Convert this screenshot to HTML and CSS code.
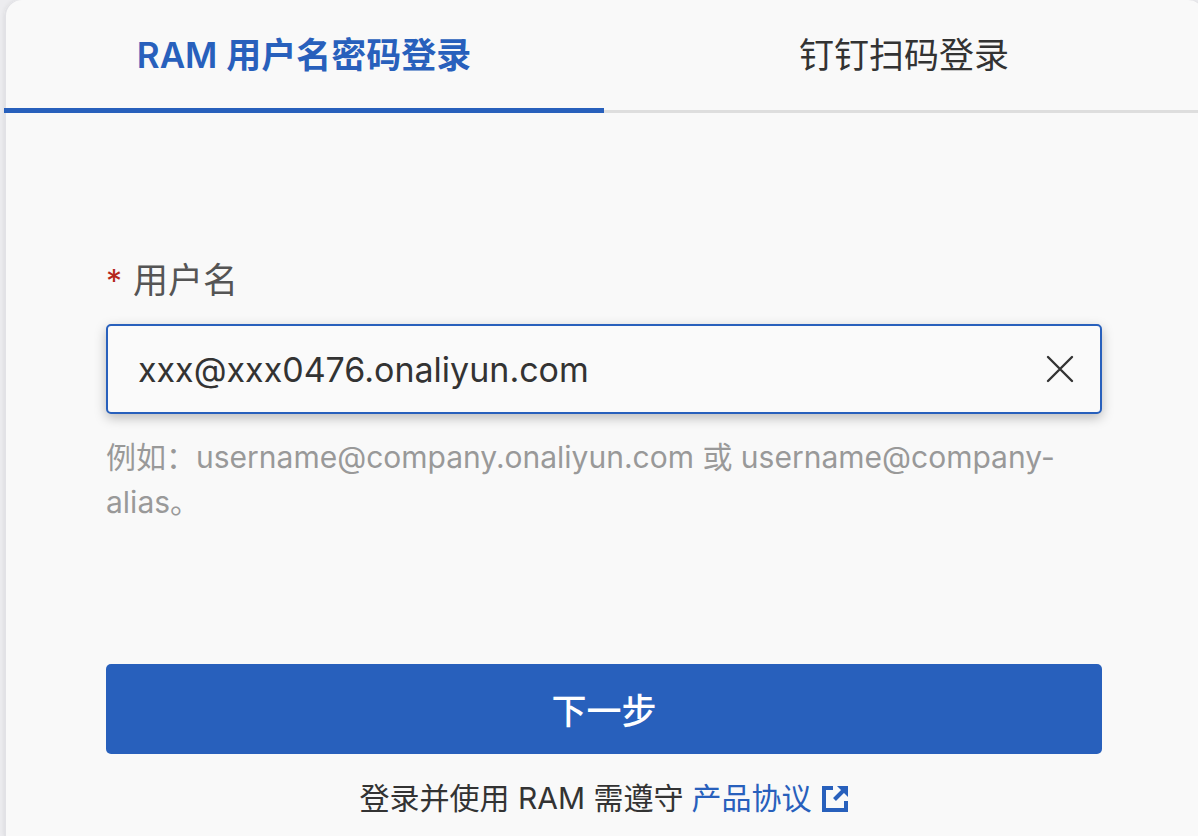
FILE: index.html
```
<!DOCTYPE html>
<html lang="zh-CN">
<head>
    <meta charset="UTF-8">
    <meta name="viewport" content="width=device-width, initial-scale=1.0">
    <title>RAM 用户登录</title>
    <link rel="stylesheet" href="styles.css">
</head>
<body>
    <main class="login-card">
        <nav class="tabs">
            <button type="button" class="tab active">RAM 用户名密码登录</button>
            <button type="button" class="tab">钉钉扫码登录</button>
        </nav>
        <form class="login-form">
            <label class="field-label" for="username"><span class="required">*</span>用户名</label>
            <div class="input-box">
                <input type="text" id="username" value="xxx@xxx0476.onaliyun.com" autocomplete="off" spellcheck="false">
                <button type="button" class="clear-btn" aria-label="清除">
                    <svg width="28" height="28" viewBox="0 0 28 28" fill="none" stroke="currentColor" stroke-width="2.4" stroke-linecap="round">
                        <path d="M2 2L26 26M26 2L2 26"/>
                    </svg>
                </button>
            </div>
            <p class="hint">例如：username@company.onaliyun.com 或 username@company-alias。</p>
            <button type="submit" class="next-btn">下一步</button>
            <p class="agreement">
                <span>登录并使用 RAM 需遵守</span>
                <a href="#">产品协议
                    <svg width="26" height="26" viewBox="0 0 26 26" fill="none" stroke="currentColor" stroke-width="4">
                        <path d="M11 2H2V24H24V15"/>
                        <path d="M12.500 13.500L22 4"/>
                        <path d="M15 0H26V11Z" fill="currentColor" stroke="none"/>
                    </svg>
                </a>
            </p>
        </form>
    </main>
</body>
</html>
```
FILE: styles.css
```
* {
    box-sizing: border-box;
}

body {
    margin: 0;
    background-color: #ececef;
    color: #333;
    font-family: Inter, "Noto Sans CJK SC", sans-serif;
    overflow-x: hidden;
}

button, input {
    font-family: inherit;
    color: inherit;
    background: none;
    border: none;
    padding: 0;
}

button {
    cursor: pointer;
}

.login-card {
    min-height: 100vh;
    margin: 0 -6px 0 4px;
    background-color: #f9f9f9;
    border-radius: 16px 16px 0 0;
    box-shadow: inset 2px 0 #e2e2e6, 0 0 4px rgba(0, 0, 0, 0.08);
}

.tabs {
    display: flex;
    height: 113px;
    box-shadow: inset 0 -3px #dedede;
}

.tab {
    flex: 1;
    padding-bottom: 4px;
    font-size: 35px;
    border-bottom: 5px solid transparent;
}

.tab.active {
    color: #2860bc;
    font-weight: 600;
    border-bottom-color: #2860bc;
}

.login-form {
    display: flex;
    flex-direction: column;
    padding: 141px 102px 14px;
}

.field-label {
    margin-bottom: 18px;
    font-size: 35px;
    line-height: 52px;
    color: #555;
}

.required {
    margin-right: 11px;
    font-size: 32px;
    line-height: 32px;
    color: #b5261c;
}

.input-box {
    display: flex;
    align-items: center;
    height: 90px;
    padding: 0 26px 0 30px;
    border: 2px solid #2860bc;
    border-radius: 5px;
    background-color: #fafafa;
    box-shadow: 0 4px 12px rgba(0, 0, 0, 0.25);
}

.input-box input {
    flex: 1;
    min-width: 0;
    font-size: 34px;
    outline: none;
}

.clear-btn {
    display: flex;
}

.hint {
    margin: 21px 0 139px;
    font-size: 30px;
    line-height: 45px;
    color: #999;
}

.next-btn {
    height: 90px;
    padding-bottom: 2px;
    border-radius: 5px;
    background-color: #2860bc;
    color: #fff;
    font-size: 35px;
    font-weight: 500;
}

.agreement {
    display: flex;
    justify-content: center;
    gap: 8px;
    margin: 22px 0 0;
    font-size: 30px;
    line-height: 45px;
}

.agreement a {
    display: flex;
    align-items: center;
    gap: 11px;
    color: #2860bc;
    text-decoration: none;
}
```
